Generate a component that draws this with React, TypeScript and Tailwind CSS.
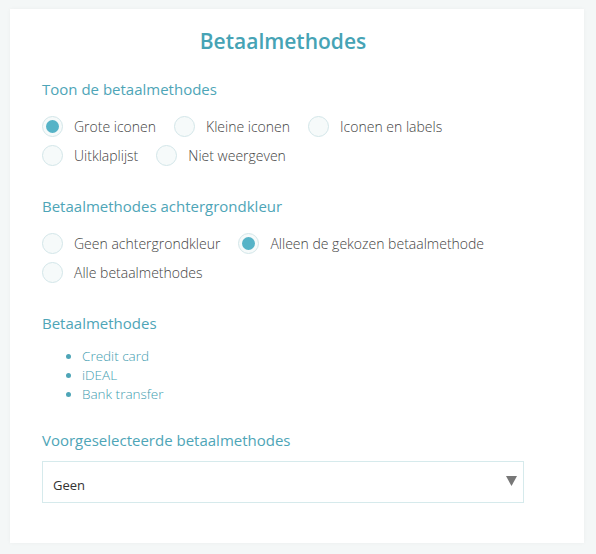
import React from "react";

type Option = { id: string; label: string; checked?: boolean };

const Radio = ({ label, checked }: Option) => (
  <label className="flex items-center gap-[11px] mr-[18px] h-[29px] cursor-pointer">
    <span className="flex items-center justify-center w-[21px] h-[21px] rounded-full border border-[#d3e6e9] bg-[#f6fafa]">
      {checked && <span className="w-[13px] h-[13px] rounded-full bg-[#56b3c7]" />}
    </span>
    <span className="text-[14px] font-light text-[#444]">{label}</span>
  </label>
);

const Heading = ({ children }: { children: React.ReactNode }) => (
  <h2 className="text-[15px] text-[#4ea5b7] leading-[20px]">{children}</h2>
);

export default function App() {
  const SHOW: Option[] = [
    { id: "1", label: "Grote iconen", checked: true },
    { id: "2", label: "Kleine iconen" },
    { id: "3", label: "Iconen en labels" },
    { id: "4", label: "Uitklaplijst" },
    { id: "5", label: "Niet weergeven" },
  ];
  const BG: Option[] = [
    { id: "1", label: "Geen achtergrondkleur" },
    { id: "2", label: "Alleen de gekozen betaalmethode", checked: true },
    { id: "3", label: "Alle betaalmethodes" },
  ];
  const METHODS = ["Credit card", "iDEAL", "Bank transfer"];

  return (
    <div
      className="w-[596px] h-[554px] bg-[#f4f7f7] pl-[10px] pt-[9px] flex"
      style={{ fontFamily: '"Open Sans", sans-serif' }}
    >
      <div className="w-[574px] h-[534px] bg-white shadow-[0_0_4px_rgba(0,0,0,0.04)] pl-[32px] pr-[60px] pt-[16px]">
        <h1 className="text-center text-[21px] font-semibold text-[#46a3b5] leading-[32px]">
          Betaalmethodes
        </h1>

        <div className="mt-[22px]">
          <Heading>Toon de betaalmethodes</Heading>
          <div className="flex flex-wrap mt-[13px]">
            {SHOW.map((o) => (
              <Radio key={o.id} {...o} />
            ))}
          </div>
        </div>

        <div className="mt-[26px]">
          <Heading>Betaalmethodes achtergrondkleur</Heading>
          <div className="flex flex-wrap mt-[13px]">
            {BG.map((o) => (
              <Radio key={o.id} {...o} />
            ))}
          </div>
        </div>

        <div className="mt-[26px]">
          <Heading>Betaalmethodes</Heading>
          <ul className="mt-[14px] pl-[40px] list-disc marker:text-[#4ea5b7]">
            {METHODS.map((m) => (
              <li key={m} className="text-[13.5px] font-light text-[#3f9db0] leading-[19px]">
                {m}
              </li>
            ))}
          </ul>
        </div>

        <div className="mt-[26px]">
          <Heading>Voorgeselecteerde betaalmethodes</Heading>
          <div className="mt-[11px] h-[42px] border border-[#d6eaec] flex items-center justify-between pl-[10px] pr-[6px]">
            <span className="text-[13px] text-[#333] mt-[7px]">Geen</span>
            <svg width="11" height="10" viewBox="0 0 11 10" className="mb-[2px]">
              <path d="M0 0 L11 0 L5.5 10 Z" fill="#777" />
            </svg>
          </div>
        </div>
      </div>
    </div>
  );
}
